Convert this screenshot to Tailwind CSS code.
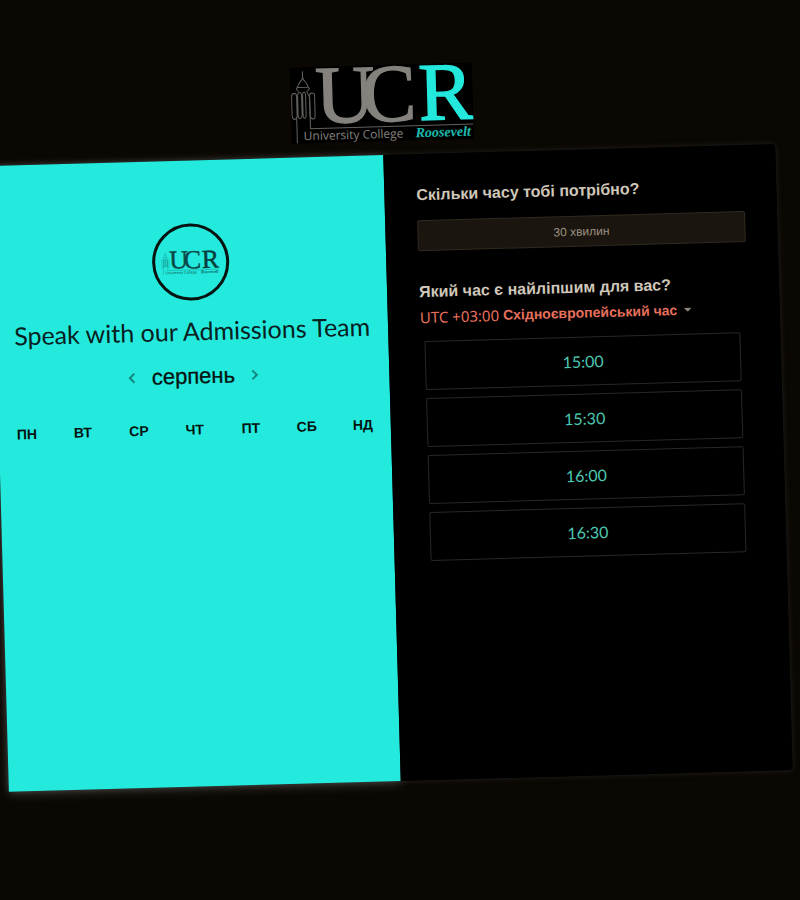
<!DOCTYPE html>
<html lang="uk">
<head>
<meta charset="utf-8">
<meta name="viewport" content="width=device-width, initial-scale=1">
<title>Speak with our Admissions Team</title>
<script src="https://cdn.jsdelivr.net/npm/@tailwindcss/browser@4"></script>
</head>
<body class="min-h-screen overflow-x-hidden bg-[#0b0703] font-['Liberation_Sans',sans-serif]">
<svg class="hidden" aria-hidden="true">
  <symbol id="logo" viewBox="0 0 182 76">
    <g fill="none" stroke="currentColor" stroke-width="1" opacity="0.75">
      <path d="M12.500 4V10M12.500 10C12 14 8 15 7.500 19L6 21.500L8 24M12.500 10C13 14 17 15 17.500 19L19 21.500L17 24M7.500 20H17.500"/>
      <path d="M1 29Q1 26 3.500 26Q6 26 6 29V49Q5 52 3.500 52Q1 51 1 48ZM7 29Q7 25 9 25Q11 25 11 29V47Q11 51 9 51Q7 51 7 47ZM12 29Q12 25 13.500 25Q15 25 15 29V47Q15 51 13.500 51Q12 51 12 47ZM19 29Q19 26 21.500 26Q24 26 24 29V48Q24 52 21.500 52Q19 51 19 48Z"/>
      <path d="M5.500 50V76M16 24Q19 28 19 33V61.500H182"/>
    </g>
    <g font-family="Liberation Serif, serif" font-size="82" stroke-width="1.4">
      <g fill="currentColor" stroke="currentColor"><text x="25" y="56">U</text><text x="71" y="56">C</text></g>
      <text x="128" y="56" class="fill-(--accent) stroke-(--accent)">R</text>
    </g>
    <text x="12" y="73" font-family="Open Sans, sans-serif" font-size="12" fill="currentColor">University College</text>
    <text x="124" y="73" font-family="Liberation Serif, serif" font-size="14" font-style="italic" font-weight="bold" class="fill-(--accent)" opacity="0.8">Roosevelt</text>
  </symbol>
</svg>
<div class="pr-4 pt-[65px]">
  <header class="flex -rotate-[1.6deg] origin-[50%_403px] justify-center">
    <svg class="h-[76px] w-[182px] bg-black text-[#85827d] [--accent:#23e8dc]" role="img" aria-label="University College Roosevelt"><use href="#logo"/></svg>
  </header>
  <main class="mt-[14px] grid min-h-[626px] -rotate-[1.6deg] grid-cols-2 rounded-sm bg-black shadow-[0_0_5px_1px_#1f1d1a]">
    <section class="bg-[#24eadd] pt-[63px] text-center text-[#08201e] shadow-[0_2px_12px_rgba(255,255,255,0.2)]">
      <div class="mx-auto flex size-[77px] items-center justify-center rounded-full border-3 border-[#061310]">
        <svg class="h-6 w-[58px] text-[#0b4947] [--accent:#073d3b]" role="img" aria-label="University College Roosevelt"><use href="#logo"/></svg>
      </div>
      <h1 class="mt-[14px] whitespace-nowrap font-['Lato',sans-serif] text-[25px] leading-8">Speak with our Admissions Team</h1>
      <div class="mt-[14px] flex h-8 items-center justify-center gap-[14px]">
        <button type="button" aria-label="Попередній місяць" class="text-[#12877f]"><svg class="size-3" viewBox="0 0 12 12" fill="none" stroke="currentColor" stroke-width="2"><path d="M9 1.500L4.500 6L9 10.500"/></svg></button>
        <h2 class="text-[22px] leading-8 text-[#061310] [-webkit-text-stroke:0.3px_#061310]">серпень</h2>
        <button type="button" aria-label="Наступний місяць" class="text-[#12877f]"><svg class="size-3" viewBox="0 0 12 12" fill="none" stroke="currentColor" stroke-width="2"><path d="M3 1.500L7.500 6L3 10.500"/></svg></button>
      </div>
      <table class="mt-[27px] w-full table-fixed text-sm font-bold text-[#061310]">
        <thead><tr><th scope="col">ПН</th><th scope="col">ВТ</th><th scope="col">СР</th><th scope="col">ЧТ</th><th scope="col">ПТ</th><th scope="col">СБ</th><th scope="col">НД</th></tr></thead>
      </table>
    </section>
    <section class="relative rounded-r-sm bg-black px-8 pt-[29px]">
      <h2 class="text-base font-bold text-[#cfc7b9]">Скільки часу тобі потрібно?</h2>
      <button type="button" class="mt-[13px] block h-[31px] w-full rounded-xs border border-[#302a20] bg-[#1b150f] text-xs text-[#9c9282]">30 хвилин</button>
      <h2 class="mt-[29px] text-base font-bold text-[#cfc7b9]">Який час є найліпшим для вас?</h2>
      <button type="button" class="mt-[3px] flex h-5 items-center gap-1 whitespace-nowrap text-[#e8705c]">
        <span class="font-['Noto_Sans',sans-serif] text-[15px]">UTC +03:00</span>
        <span class="text-sm font-bold">Східноєвропейський час</span>
        <svg class="ml-[2px] h-1 w-2 text-[#8d8577]" viewBox="0 0 8 4" fill="currentColor"><path d="M0 0H8L4 4Z"/></svg>
      </button>
      <div class="mt-[14px] grid gap-2 pl-1 pr-2 font-['Lato',sans-serif] text-base text-[#4cc9b2]">
        <button type="button" class="h-[49px] rounded-xs border border-[#2b2823]">15:00</button>
        <button type="button" class="h-[49px] rounded-xs border border-[#2b2823]">15:30</button>
        <button type="button" class="h-[49px] rounded-xs border border-[#2b2823]">16:00</button>
        <button type="button" class="h-[49px] rounded-xs border border-[#2b2823]">16:30</button>
      </div>
    </section>
  </main>
</div>
</body>
</html>
